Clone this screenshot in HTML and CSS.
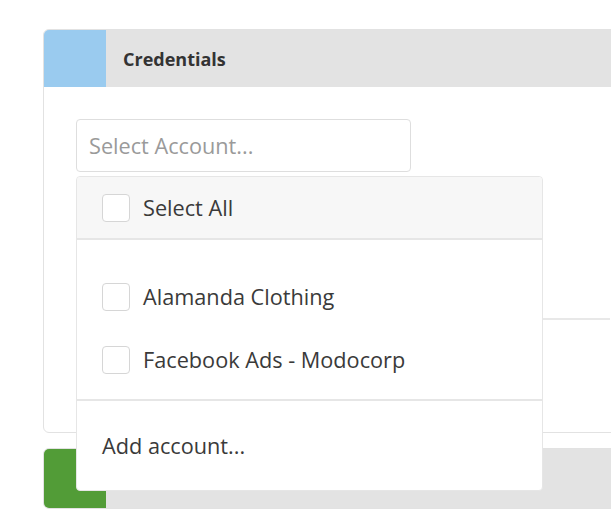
FILE: index.html
```html
<!DOCTYPE html>
<html lang="en">
<head>
    <meta charset="UTF-8">
    <meta name="viewport" content="width=device-width, initial-scale=1.0">
    <title>Credentials</title>
    <link rel="stylesheet" href="styles.css">
</head>
<body>
    <div class="card">
        <div class="card-head">
            <span class="tab tab-blue"></span>
            <h2>Credentials</h2>
        </div>
        <div class="card-body">
            <div class="picker">
                <div class="picker-input">Select Account...</div>
                <div class="dropdown">
                    <label class="option dropdown-head">
                        <span class="check"></span>
                        Select All
                    </label>
                    <div class="dropdown-list">
                        <label class="option">
                            <span class="check"></span>
                            Alamanda Clothing
                        </label>
                        <label class="option">
                            <span class="check"></span>
                            Facebook Ads - Modocorp
                        </label>
                    </div>
                    <div class="dropdown-foot">Add account...</div>
                </div>
            </div>
            <div class="row-line"></div>
        </div>
    </div>

    <div class="card collapsed">
        <div class="card-head">
            <span class="tab tab-green"></span>
            <h2></h2>
        </div>
    </div>
</body>
</html>
```

FILE: styles.css
```css
* {
    box-sizing: border-box;
    margin: 0;
    padding: 0;
}

body {
    font-family: "Open Sans", "Noto Sans", sans-serif;
    color: #333;
    background: #fff;
    padding: 29px 0 0 43px;
    overflow: hidden;
}

.card {
    width: 600px;
    border: 1px solid #e2e2e2;
    border-radius: 6px;
    background: #fff;
}

.card-head {
    display: flex;
    align-items: center;
    height: 57px;
    background: #e3e3e3;
    border-radius: 5px 5px 0 0;
    overflow: hidden;
}

.tab {
    align-self: stretch;
    width: 62px;
}

.tab-blue {
    background: #9acbef;
}

.tab-green {
    background: #529c37;
}

.card-head h2 {
    font-size: 18px;
    font-weight: 700;
    color: #333;
    margin-left: 17px;
}

.card-body {
    height: 345px;
    padding: 32px 32px 0;
}

.picker {
    position: relative;
    width: 335px;
}

.picker-input {
    height: 53px;
    border: 1px solid #dedede;
    border-radius: 4px;
    padding: 0 12px;
    display: flex;
    align-items: center;
    font-size: 21.7px;
    color: #9a9a9a;
}

/* the open menu hangs over the rest of the card */
.dropdown {
    position: absolute;
    top: 57px;
    left: 0;
    width: 467px;
    z-index: 2;
    background: #fff;
    border: 1px solid #e6e6e6;
    border-radius: 4px;
    font-size: 21.7px;
    color: #3a3a3a;
}

.option {
    display: flex;
    align-items: center;
    gap: 13px;
    height: 63px;
    padding-left: 25px;
}

.dropdown-head {
    height: 63px;
    background: #f7f7f7;
    border-bottom: 2px solid #e6e6e6;
    border-radius: 4px 4px 0 0;
}

.dropdown-list {
    padding: 25px 0 8px;
    border-bottom: 2px solid #e6e6e6;
}

.check {
    width: 28px;
    height: 28px;
    border: 1px solid #d6d6d6;
    border-radius: 4px;
    background: #fff;
}

.dropdown-foot {
    height: 89px;
    display: flex;
    align-items: center;
    padding-left: 25px;
}

.row-line {
    margin-top: 146px;
    border-top: 2px solid #e8e8e8;
}

.collapsed {
    margin-top: 15px;
}

.collapsed .card-head {
    height: 59px;
    border-radius: 5px;
}
```
